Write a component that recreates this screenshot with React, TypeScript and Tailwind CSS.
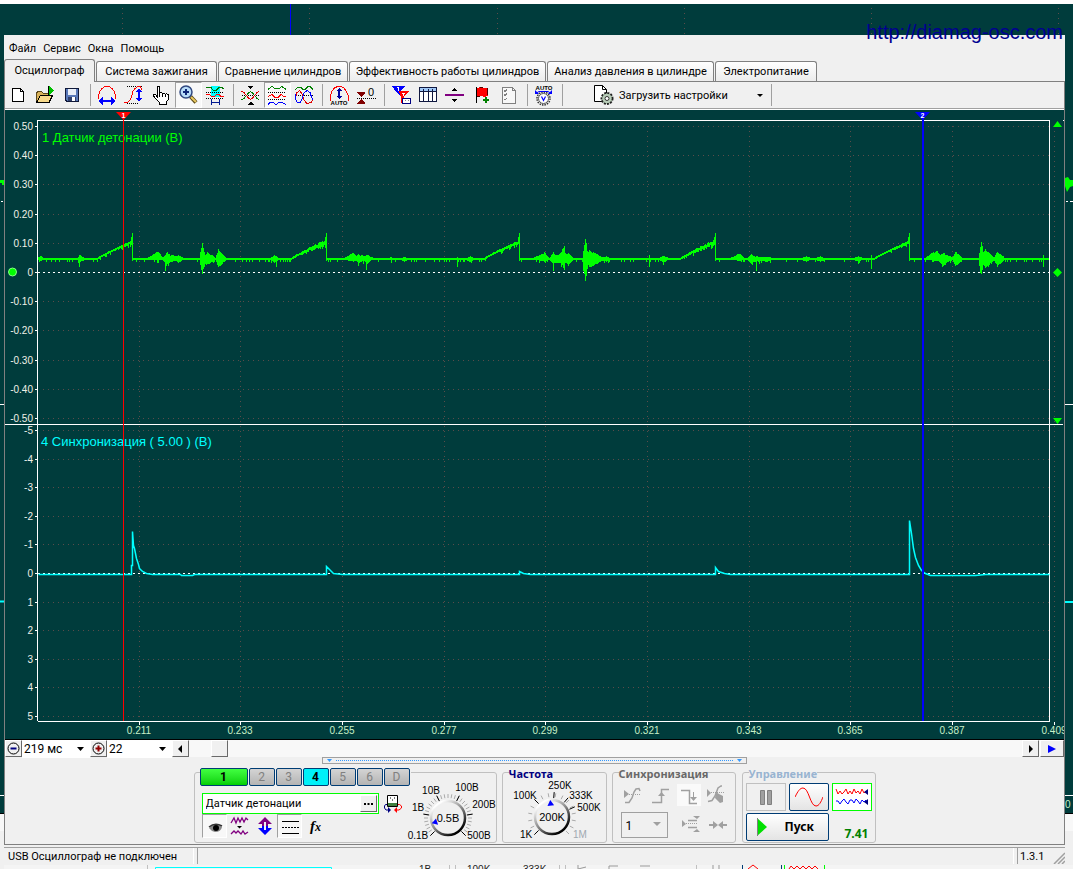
import type { ReactNode } from "react";

const GRID_X = [139, 240, 342, 444, 545, 647, 749, 850, 952, 1054];
const TIME_LABELS = ["0.211", "0.233", "0.255", "0.277", "0.299", "0.321", "0.343", "0.365", "0.387", "0.409"];
const CH1_ROWS: [number, string][] = [
    [126, "0.50"], [155, "0.40"], [184, "0.30"], [214, "0.20"], [243, "0.10"], [272, "0"],
    [301, "-0.10"], [330, "-0.20"], [360, "-0.30"], [389, "-0.40"], [418, "-0.50"],
];
const CH4_ROWS: [number, string][] = [
    [430, "-5"], [459, "-4"], [487, "-3"], [516, "-2"], [544, "-1"], [573, "0"],
    [602, "1"], [630, "2"], [659, "3"], [687, "4"], [716, "5"],
];

const SPIKES = [132, 326, 519, 715, 909];

// x, spread to the left, spread to the right, height above and below the base line
const BURSTS: [number, number, number, number, number][] = [
    [40, 4, 6, 3, 2], [80, 4, 6, 4, 3], [158, 12, 5, 8, 2], [167, 5, 6, 7, 6], [172, 12, 14, 4, 3], [178, 4, 6, 4, 4],
    [202, 3, 3, 18, 16], [207, 4, 9, 7, 6], [218, 3, 8, 10, 9],
    [274, 5, 6, 4, 4], [353, 10, 5, 7, 3], [358, 3, 5, 6, 5], [362, 12, 16, 4, 3], [367, 4, 5, 5, 5], [391, 5, 5, 2, 2], [404, 5, 5, 2, 3], [470, 6, 5, 3, 3],
    [544, 12, 5, 7, 3], [553, 4, 5, 7, 6], [560, 14, 14, 5, 5], [563, 5, 4, 13, 9], [568, 5, 5, 7, 7],
    [585, 3, 3, 23, 24], [589, 4, 15, 9, 9], [606, 6, 5, 3, 3], [663, 5, 6, 4, 4],
    [739, 10, 5, 6, 2], [751, 5, 7, 5, 5], [755, 12, 20, 3, 3], [766, 9, 8, 3, 3],
    [806, 6, 6, 3, 3], [820, 6, 6, 3, 3], [858, 6, 6, 3, 3],
    [936, 12, 6, 9, 2], [943, 6, 6, 7, 8], [944, 12, 12, 5, 4], [955, 3, 8, 8, 8], [981, 3, 3, 18, 17], [985, 5, 9, 11, 10], [997, 4, 8, 8, 8],
];

// single column ticks: x, up, down
const TICKS: [number, number, number][] = [
    [79, 4, 8], [165, 3, 12], [276, 3, 8], [366, 2, 11], [457, 2, 8], [553, 7, 12],
    [564, 13, 11], [649, 4, 8], [756, 3, 12], [871, 4, 10], [1043, 4, 8],
];

function noise(n: number) {
    const v = Math.sin(n * 12.9898) * 43758.5453;
    return v - Math.floor(v);
}

function knockTrace() {
    let d = "";
    for (let x = 38; x < 1049; x++) {
        let mid = 259;
        let up = 1;
        let down = 1;
        const spike = SPIKES.find((s) => x > s - 35 && x <= s);
        if (spike) {
            const t = (x - spike + 35) / 35;
            mid = 259 - 17 * Math.pow(t, 0.85);
            // two of the ramps end noisier than the others
            const rough = spike === 326 || spike === 715 ? 2 : 1;
            up += noise(x) * t * rough;
            down += noise(x + 7) * 1.5 * t * rough;
            if (x === spike - 1) up = 5;
            if (x === spike) {
                up = 9;
                down = 19;
            }
        }
        for (const [bx, left, right, bu, bd] of BURSTS) {
            const k = x < bx ? 1 - (bx - x) / left : 1 - (x - bx) / right;
            if (k > 0) {
                const swell = Math.pow(k, 0.8);
                up = Math.max(up, bu * swell * (0.8 + noise(x) * 0.2));
                down = Math.max(down, bd * swell * (0.8 + noise(x + 3) * 0.2));
            }
        }
        const tick = TICKS.find((t) => t[0] === x);
        if (tick) {
            up = Math.max(up, tick[1]);
            down = Math.max(down, tick[2]);
        } else if (noise(x + 50) > 0.86) {
            down += 2;
        }
        d += `M${x}.5 ${Math.round(mid - up)}V${Math.round(mid + down)}`;
    }
    return d;
}

const SYNC_TRACE =
    "M38 574H131V565H132V531L133 545L134 548L136 558L138 564L139 568L142 571L146 573L152 574H180L181 575H192L194 574H326V566L329 569L333 573L342 574H519V571L523 573L530 574H715V567L718 571L724 573L730 574H909V520L911 533L913 548L915 557L918 565L921 570L925 573L930 575H975L985 574H1049";

function Chart() {
    return (
        <svg viewBox="5 110 1059 629" className="block h-auto w-full bg-[#003c3c]" fontFamily="Liberation Sans, Arial, sans-serif" fontSize="10">
            <g stroke="#5a4c4a" strokeDasharray="1 4" shapeRendering="crispEdges">
                {GRID_X.map((x) => (
                    <line key={x} x1={x + 0.5} x2={x + 0.5} y1="126" y2="721" />
                ))}
                {[...CH1_ROWS, ...CH4_ROWS].map(([y]) => (
                    <line key={y} x1="43" x2="1049" y1={y + 0.5} y2={y + 0.5} />
                ))}
            </g>
            <g fill="#f0f0e8" textAnchor="end">
                {[...CH1_ROWS, ...CH4_ROWS].map(([y, label]) => (
                    <text key={y} x="33" y={y + 4}>{label}</text>
                ))}
            </g>
            <g fill="#c8f0c8" textAnchor="middle">
                {GRID_X.map((x, i) => (
                    <text key={x} x={x} y="734">{TIME_LABELS[i]}</text>
                ))}
            </g>
            <g stroke="#fff" fill="none" shapeRendering="crispEdges">
                <path d="M37.500 721V120.500H1049.500V721.500H37.500M5 424.500H1063M1063 120.500H1064" />
                {[...CH1_ROWS, ...CH4_ROWS].map(([y]) => (
                    <path key={y} d={`M35 ${y}.5H38`} />
                ))}
                {GRID_X.map((x) => (
                    <path key={x} d={`M${x}.5 722V725`} />
                ))}
                <path d="M38 272.500H1049M38 573.500H1049" strokeDasharray="2 3" />
            </g>
            <path d={knockTrace()} stroke="#00ff00" shapeRendering="crispEdges" />
            <path d={SYNC_TRACE} stroke="#00ffff" strokeWidth="1.500" fill="none" transform="translate(0.5 0.5)" />
            <g fill="#00ff00">
                <circle cx="12.500" cy="272" r="4" stroke="#8f8" />
                <path d="M1053 127L1057.500 121L1062 127ZM1053 418H1062L1057.500 424ZM1053 272.500L1057.500 268L1062 272.500L1057.500 277Z" />
            </g>
            <text x="42" y="142" fontSize="13" fill="#00ff00">1 Датчик детонации (В)</text>
            <text x="41" y="446" fontSize="13" fill="#00ffff">4 Синхронизация ( 5.00 ) (В)</text>
            <g shapeRendering="crispEdges">
                <path d="M123.500 118V721" stroke="#ff0000" />
                <path d="M922.500 118V721" stroke="#0000ff" strokeWidth="2" />
            </g>
            <path d="M116 112H131L123.500 120Z" fill="#ff0000" />
            <path d="M915 112H930L922.500 120Z" fill="#0000ff" />
            <g fill="#fff" fontSize="7" fontWeight="bold" textAnchor="middle">
                <text x="123.500" y="118">1</text>
                <text x="922.500" y="118">2</text>
            </g>
        </svg>
    );
}

// Second application window that shows around the edges
function BackWindow() {
    return (
        <svg viewBox="0 0 1077 869" preserveAspectRatio="xMinYMin slice" className="absolute inset-0 h-full w-full" fontFamily="Liberation Sans, Arial, sans-serif">
            <path d="M0 0H1077V869H0Z" fill="#f0f0f0" />
            <path d="M0 0H1077V4H0Z" fill="#fff" />
            <path d="M0 4H1073V814H0Z" fill="#003c3c" />
            <path d="M1073 4H1077V869H1073Z" fill="#fff" />
            <path d="M0 813.500H1073" stroke="#000" />
            <path d="M0 814H1073V831H0Z" fill="#f8f8f8" />
            <g stroke="#5a4c4a" strokeDasharray="1 4">
                <path d="M122.500 8V35M309.500 8V35M497.500 8V35M684.500 8V35M871.500 8V35M1058.500 8V35" />
            </g>
            <path d="M290.500 4V35" stroke="#0000ff" strokeWidth="1" />
            <path d="M0 180H4V185H2V183H0ZM1065 178L1068 177L1070 180H1073V186L1070 187L1067 192L1065 186Z" fill="#00ff00" />
            <path d="M1 201.500H3M1066 201.500H1068M1070 201.500H1073M0 404.500H4M1065 404.500H1073M0 795.500H4M1065 795.500H1073" stroke="#fff" />
            <path d="M0 601.500H4M1065 602H1073" stroke="#00ffff" strokeWidth="2" />
            <text x="1065" y="808" fontSize="10" fill="#c8f0c8">0</text>
            <path d="M4 865H1073V869H4Z" fill="#f4f4f4" />
            <path d="M155.500 869V867.500H331.500V869" stroke="#0ff" fill="none" />
            <path d="M147.500 865V869M449.500 865V869M455.500 865V869M559.500 865V869M565.500 865V869M696.500 865V869" stroke="#c0c0c0" />
            <g fontSize="10" fill="#222">
                <text x="419" y="873">1В</text>
                <text x="467" y="873">100K</text>
                <text x="523" y="873">333K</text>
            </g>
            <path d="M578 865V869L586 867M618 866H609V869M650 866H640M713 865V869M719 865V869" stroke="#999" fill="none" />
            <path d="M742.500 865V869M781.500 865V869" stroke="#003c74" />
            <path d="M748 869L753 865L758 869M789 869L791 866L794 869L797 866L800 869L803 866L806 869L809 866L812 869L815 866L818 869" stroke="#ff0000" fill="none" />
            <path d="M784.500 865V869M824.500 865V869" stroke="#00ff00" />
        </svg>
    );
}

function ToolButton({ label, pressed, children }: { label: string; pressed?: boolean; children: ReactNode }) {
    return (
        <button
            type="button"
            aria-label={label}
            aria-pressed={pressed}
            className={`h-[26px] w-[27px] shrink-0 border ${pressed ? "border-t-[#a0a0a0] border-l-[#a0a0a0] border-r-white border-b-white bg-[#f8f8f8]" : "border-transparent"}`}
        >
            <svg viewBox="1 1 25 24" className="h-[24px] w-[25px]" fill="none" shapeRendering="crispEdges">
                {children}
            </svg>
        </button>
    );
}

function Separator() {
    return (
        <div className="flex h-[26px] w-2 shrink-0 justify-center py-0.5">
            <div className="w-px bg-[#a0a0a0]" />
        </div>
    );
}

function Toolbar() {
    return (
        <div className="flex h-[27px] items-center border-b border-[#a0a0a0] bg-[#f0f0f0]">
            <ToolButton label="Новый">
                <path d="M7.500 6.500H15.500L18.500 9.500V19.500H7.500Z" fill="#fff" stroke="#000" />
                <path d="M15.500 6.500V9.500H18.500" stroke="#000" />
            </ToolButton>
            <ToolButton label="Открыть">
                <path d="M4.500 20.500V10.500L6.500 9.500H9.500L11.500 11.500H16.500V13.500" fill="#d9b25a" stroke="#5b471b" />
                <path d="M4.500 20.500L8.500 13.500H20.500L17 20.500Z" fill="#f7d98a" stroke="#000" />
                <path d="M16.500 4V13" stroke="#000" />
                <path d="M17 4L22 9L17 13Z" fill="#00c000" />
            </ToolButton>
            <ToolButton label="Сохранить">
                <path d="M6.500 6.500H19.500V19.500H8L6.500 18Z" fill="#5878b8" stroke="#101838" />
                <path d="M9 7H17V13H9Z" fill="#e8eef8" />
                <path d="M9 15H17V19H9Z" fill="#30406c" />
                <path d="M13 15H16V19H13Z" fill="#fff" />
            </ToolButton>
            <Separator />
            <ToolButton label="Период">
                <path d="M4.500 17V14L5.500 10L8 6.500L11 4.500H15L18 6.500L20.500 10L21.500 14V17" stroke="#ff0000" />
                <path d="M8 19H18" stroke="#0000ff" strokeWidth="2" />
                <path d="M4 19L9 15V23ZM22 19L17 15V23Z" fill="#0000ff" />
            </ToolButton>
            <ToolButton label="Амплитуда">
                <path d="M6 4.500H22M6 21.500H17" stroke="#000" strokeDasharray="1 1" />
                <path d="M3 20.500H5.500L8.500 19.500L10.500 14.500L12 9L14 6.500L17 4.500H19L21.500 8.500" stroke="#ff0000" />
                <path d="M18 9V18" stroke="#0000ff" strokeWidth="2" />
                <path d="M18 6L21 10H15ZM18 20L21 16H15Z" fill="#0000ff" />
            </ToolButton>
            <ToolButton label="Рука">
                <path d="M9.500 15.500V6C9.500 4 11.500 4 11.500 6V11.500C12 10 14 10.500 14.500 12C15 10.800 17 11 17.500 12.500C18 11.500 20.500 12 20.500 14L20 18L18.500 20V22H11V20L8 17L5.500 14C4.500 12.500 6.500 11.500 7.500 12.500L9.500 15" fill="#fff" stroke="#000" />
                <path d="M11.500 11V14.500M14.500 12V14.500M17.500 12.500V15" stroke="#000" />
            </ToolButton>
            <ToolButton label="Лупа" pressed>
                <g shapeRendering="auto">
                    <path d="M15.500 14.500L21 20.500" stroke="#5c4a18" strokeWidth="4" />
                    <path d="M16 15L21 20" stroke="#e8c860" strokeWidth="2" />
                    <circle cx="11" cy="10" r="6" fill="#b8dcf8" stroke="#304880" strokeWidth="1.500" />
                    <path d="M8 10H14M11 7V13" stroke="#102878" strokeWidth="2" />
                </g>
            </ToolButton>
            <ToolButton label="Интервал">
                <path d="M9 4H18V15H9Z" fill="#00ffff" />
                <path d="M4 5.500H9L11.500 8.500H14L17 5.500H20L22 7" stroke="#007800" />
                <path d="M4 10.500H22M4 16.500H22" stroke="#000" strokeDasharray="1 1" />
                <path d="M4 12.500H7L10 14.500H12L15 12.500H17L19 14.500H22" stroke="#ff0000" />
                <path d="M9.500 17V23M17.500 17V23M10 20.500H17" stroke="#001890" />
            </ToolButton>
            <Separator />
            <ToolButton label="Свести">
                <path d="M10.500 4H16.500L13.500 7ZM10.500 22.500H16.500L13.500 19.500Z" fill="#000" />
                <path d="M5 13.500H22" stroke="#000" strokeDasharray="1 1" />
                <path d="M4.500 17.500L7 16.500L11 11.500L13.500 9.500L16 11.500L20 16.500L22.500 17.500" stroke="#008000" />
                <path d="M4.500 9.500L7 10.500L11 15.500L13.500 17.500L16 15.500L20 10.500L22.500 9.500" stroke="#e00000" />
            </ToolButton>
            <ToolButton label="Разнести" pressed>
                <path d="M4 7.500L8 4.500L11 6.500H15L18 4.500L22 7.500" stroke="#008000" />
                <path d="M4 10.500H22M4 17.500H22" stroke="#000" strokeDasharray="1 1" />
                <path d="M4 14.500L8 12.500L11 15.500H14L17 12.500L20 14.500H22" stroke="#ff0000" />
                <path d="M4 22.500L6 20.500H9L12 22.500L15 20.500H18L22 22.500" stroke="#0000ff" />
            </ToolButton>
            <ToolButton label="Совместить">
                <path d="M4 7.500L7 5.500H10L12 7.500H14L17 4.500H19L22 7.500" stroke="#008000" />
                <path d="M5 13.500H22" stroke="#000" strokeDasharray="1 1" />
                <path d="M4.500 18L5.500 11L8.500 8.500L11 12L13 18L16 21.500L20 20.500L22 17.500" stroke="#e00000" />
                <path d="M4.500 12V17L6.500 20.500H9L11 17L13 11L16 8.500L19 10.500L20.500 15L22 18" stroke="#0000ff" />
            </ToolButton>
            <Separator />
            <ToolButton label="Авто амплитуда">
                <path d="M4.500 19V14L6 9L9 5.500L12 4.500H15L18 6L20.500 10L22.500 14V19" stroke="#ff0000" />
                <path d="M13 8V15" stroke="#0000a0" strokeWidth="2" />
                <path d="M13 6L16 9H10ZM13 17L16 14H10Z" fill="#0000a0" />
                <text x="13" y="23" textAnchor="middle" fontSize="6" fontWeight="bold" fill="#000" fontFamily="Liberation Sans, sans-serif">AUTO</text>
            </ToolButton>
            <ToolButton label="Ноль">
                <path d="M4 10H12V11L8 15L4 11ZM4 22H12V21L8 17L4 21Z" fill="#800000" />
                <path d="M4 16.500H23" stroke="#000" strokeDasharray="1 1" />
                <text x="15" y="14" fontSize="11" fill="#000" fontFamily="Liberation Sans, sans-serif">0</text>
            </ToolButton>
            <Separator />
            <ToolButton label="Фильтр">
                <path d="M4 4H17L12 10L13 15L9 11Z" fill="#0000ff" />
                <path d="M11 9H21L16 15V21H13V15Z" fill="#ff0000" />
                <path d="M9 5.500H10.500V9M14 11.500H17M15.500 12V14" stroke="#fff" />
                <path d="M14.500 16.500H22.500V21.500H14.500Z" fill="#fff" stroke="#000080" />
                <path d="M16.500 18.500H18M20 18.500H21" stroke="#888" />
            </ToolButton>
            <ToolButton label="Таблица">
                <path d="M4.500 5.500H21.500V19.500H4.500Z" fill="#fff" stroke="#101840" />
                <path d="M5 6H21V9H5Z" fill="#a0c8f8" />
                <path d="M4.500 9.500H21.500M8.500 7V19M13.500 7V19M17.500 7V19" stroke="#101840" />
            </ToolButton>
            <ToolButton label="Линия">
                <path d="M3 13H22" stroke="#800080" strokeWidth="2" />
                <path d="M9.500 9L12.500 6L15.500 9ZM9.500 17L12.500 20L15.500 17Z" fill="#000" />
            </ToolButton>
            <ToolButton label="Флаг">
                <path d="M7.500 5V21" stroke="#000" />
                <path d="M8 6L11 5L14 6.500L18 5.500L19 14L15 15L12 13.500L8 15Z" fill="#ff0000" />
                <path d="M11 5.500H14M18.500 6V13M8 14.500H11" stroke="#500000" />
                <path d="M17 15V21M14 18H20" stroke="#008000" strokeWidth="2" />
            </ToolButton>
            <ToolButton label="Список">
                <path d="M6.500 5.500H16.500L19.500 8.500V21.500H6.500Z" fill="#f8f8f8" stroke="#808080" />
                <path d="M8 8.500L9 9.500L11 7.500M8 12.500L9 13.500L11 11.500M8 17L9 18L11 16" stroke="#808080" />
                <path d="M16.500 5.500V8.500H19.500" stroke="#808080" />
            </ToolButton>
            <Separator />
            <ToolButton label="Авто">
                <text x="13" y="8" textAnchor="middle" fontSize="6" fontWeight="bold" fill="#000" fontFamily="Liberation Sans, sans-serif">AUTO</text>
                <g shapeRendering="auto">
                    <circle cx="12.500" cy="16.500" r="6.500" stroke="#333" strokeWidth="1.500" strokeDasharray="1.500 1" />
                    <circle cx="12.500" cy="16.500" r="5" fill="#fff" stroke="#555" />
                    <path d="M10.500 14.500L12.500 18.500L14.500 14.500" stroke="#0000ff" strokeWidth="1.200" />
                    <path d="M4.500 11.500L8 9.500H17L20.500 11.500" stroke="#0000ff" />
                    <path d="M4 8V12H8ZM21 8V12H17Z" fill="#0000ff" />
                </g>
            </ToolButton>
            <Separator />
            <button type="button" className="flex h-[26px] w-[201px] shrink-0 items-center pl-[26px] text-left text-[11px]">
                <svg viewBox="0 0 22 22" className="mr-[5px] h-[22px] w-[22px] shrink-0" fill="none">
                    <path d="M2.500 1.500H10.500L14.500 5.500V17.500H2.500Z" fill="#fff" stroke="#000" />
                    <path d="M10.500 1.500V5.500H14.500" stroke="#000" />
                    <circle cx="15" cy="14.500" r="5.500" fill="#a8c0a8" stroke="#222" strokeWidth="2" strokeDasharray="2 1.200" />
                    <circle cx="15" cy="14.500" r="4.500" fill="#b8ccb8" />
                    <circle cx="15" cy="14.500" r="2" fill="#fff" stroke="#333" />
                </svg>
                <span className="pt-0.5">Загрузить настройки</span>
                <svg viewBox="0 0 6 3" className="mr-1 ml-auto h-[3px] w-[6px]">
                    <path d="M0 0H6L3 3Z" />
                </svg>
            </button>
            <Separator />
        </div>
    );
}

const TABS = [
    { name: "Осциллограф", width: "w-[91px]" },
    { name: "Система зажигания", width: "w-[121px]" },
    { name: "Сравнение цилиндров", width: "w-[130px]" },
    { name: "Эффективность работы цилиндров", width: "w-[197px]" },
    { name: "Анализ давления в цилиндре", width: "w-[167px]" },
    { name: "Электропитание", width: "w-[102px]" },
];

function Tabs() {
    return (
        <div role="tablist" className="flex h-[23px] items-end gap-px border-b border-[#808080] text-[11px]">
            {TABS.map((tab, i) => (
                <button
                    key={tab.name}
                    type="button"
                    role="tab"
                    aria-selected={i === 0}
                    className={`shrink-0 rounded-t-[3px] border border-b-0 border-[#808080] whitespace-nowrap ${tab.width} ${
                        i === 0 ? "-mb-px h-[23px] bg-[#f0f0f0]" : "h-[20px] bg-linear-to-b from-white to-[#ececec] pt-0.5"
                    }`}
                >
                    {tab.name}
                </button>
            ))}
        </div>
    );
}

function ScrollRow() {
    return (
        <div className="flex h-[18px] border-t border-black bg-[#f8f8f8] text-[12px]">
            <RaisedButton label="Уменьшить">
                <circle cx="7.500" cy="7.500" r="5.500" stroke="#000" fill="none" />
                <path d="M4.500 7.500H10.500" stroke="#000080" strokeWidth="2" />
            </RaisedButton>
            <Combo label="Развертка" value="219 мс" className="w-[68px]" />
            <RaisedButton label="Увеличить">
                <circle cx="7.500" cy="7.500" r="5.500" stroke="#000" fill="none" />
                <path d="M4.500 7.500H10.500M7.500 4.500V10.500" stroke="#900000" strokeWidth="2" />
            </RaisedButton>
            <Combo label="Масштаб" value="22" className="w-[65px]" />
            <RaisedButton label="Влево">
                <path d="M9 4V12L5 8Z" />
            </RaisedButton>
            <div className="flex grow bg-[#f8f8f8] pl-[22px]">
                <div className="w-[17px] border border-t-white border-l-white border-r-[#696969] border-b-[#696969] bg-[#f0f0f0]" />
            </div>
            <RaisedButton label="Вправо">
                <path d="M6 4V12L10 8Z" />
            </RaisedButton>
            <button type="button" aria-label="Воспроизвести" className="ml-px flex w-6 items-center justify-center border border-t-white border-l-white border-r-[#696969] border-b-[#696969] bg-[#f0f0f0]">
                <svg viewBox="0 0 8 8" className="h-2 w-2">
                    <path d="M0 0L8 4L0 8Z" fill="#0000ff" />
                </svg>
            </button>
        </div>
    );
}

function RaisedButton({ label, children }: { label: string; children: ReactNode }) {
    return (
        <button type="button" aria-label={label} className="w-[17px] shrink-0 border border-t-white border-l-white border-r-[#696969] border-b-[#696969] bg-[#f0f0f0]">
            <svg viewBox="0 0 15 15" className="h-[15px] w-[15px]">
                {children}
            </svg>
        </button>
    );
}

function Combo({ label, value, className }: { label: string; value: string; className: string }) {
    return (
        <div className={`relative shrink-0 bg-white ${className}`}>
            <select aria-label={label} className="h-[17px] w-full appearance-none bg-white pl-0.5 leading-[17px]">
                <option>{value}</option>
            </select>
            <svg viewBox="0 0 7 4" className="pointer-events-none absolute top-[7px] right-[6px] h-1 w-[7px]">
                <path d="M0 0H7L3.500 4Z" />
            </svg>
        </div>
    );
}

interface KnobProps {
    value: string;
    label: string;
    cx: number;
    cy: number;
    pointer: number;
    step: number;
    marks: number[];
    labels: [number, number, string][];
}

function polar(cx: number, cy: number, r: number, angle: number) {
    const a = ((angle - 90) * Math.PI) / 180;
    return `${(cx + r * Math.cos(a)).toFixed(1)} ${(cy + r * Math.sin(a)).toFixed(1)}`;
}

function Knob({ value, label, cx, cy, pointer, step, marks, labels }: KnobProps) {
    const minor: number[] = [];
    for (let a = -135; a <= 135; a += step) minor.push(a);
    return (
        <svg role="img" aria-label={label} viewBox="0 0 100 66" className="h-[66px] w-[100px] shrink-0" fontFamily="Liberation Sans, Arial, sans-serif" fontSize="10">
            <defs>
                <linearGradient id={`rim-${value}`} x1="0.2" y1="0.1" x2="0.8" y2="0.9">
                    <stop offset="0" stopColor="#fff" />
                    <stop offset="0.5" stopColor="#888" />
                    <stop offset="1" stopColor="#000" />
                </linearGradient>
            </defs>
            {minor.map((a) => (
                <path key={a} d={`M${polar(cx, cy, 20, a)}L${polar(cx, cy, 24, a)}`} stroke="#aaa" />
            ))}
            {marks.map((a) => (
                <path key={a} d={`M${polar(cx, cy, 19, a)}L${polar(cx, cy, 25, a)}`} stroke="#000" />
            ))}
            <circle cx={cx} cy={cy} r="17" fill="#f0f0f0" stroke={`url(#rim-${value})`} strokeWidth="2.500" />
            <path d={`M${polar(cx, cy, 17, pointer)}L${polar(cx, cy, 12, pointer - 16)}L${polar(cx, cy, 12, pointer + 16)}Z`} fill="#0000ff" />
            <text x={cx} y={cy + 4} textAnchor="middle" fontSize="11">{value}</text>
            {labels.map(([x, y, text]) => (
                <text key={text} x={x} y={y} textAnchor="middle" fill={text === "1M" ? "#a0a8b0" : "#000"}>{text}</text>
            ))}
        </svg>
    );
}

const CHANNELS = ["1", "2", "3", "4", "5", "6", "D"];

function channelStyle(name: string) {
    if (name === "1") return "w-12 bg-linear-to-b from-[#40ff40] to-[#00d000] font-bold text-black";
    if (name === "4") return "w-[26px] bg-[#00f0f8] font-bold text-black";
    return "w-[26px] bg-linear-to-b from-[#d4d4d4] to-[#b4b4b4] text-[#808080]";
}

function ChannelPanel() {
    return (
        <section aria-label="Канал" className="mt-[7px] mr-[5px] flex h-[71px] w-[303px] rounded-[3px] border border-[#c0c0c0]">
            <div className="-mt-[5px] ml-[5px] w-[211px] shrink-0">
                <div className="flex gap-px bg-[#f0f0f0] text-[12px]">
                    {CHANNELS.map((name) => (
                        <button key={name} type="button" className={`h-[18px] shrink-0 rounded-[2px] border border-[#003c74] leading-4 ${channelStyle(name)}`}>
                            {name}
                        </button>
                    ))}
                </div>
                <div className="mt-[7px] ml-0.5 flex items-center gap-1">
                    <div className="flex h-[21px] w-[177px] border border-[#00ff00] bg-white p-px">
                        <input aria-label="Датчик" defaultValue="Датчик детонации" className="w-0 grow pt-0.5 pl-0.5 text-[11px] outline-none" />
                        <button type="button" aria-label="Выбрать" className="w-[17px] border border-t-white border-l-white border-r-[#696969] border-b-[#696969] bg-[#f0f0f0]">
                            <svg viewBox="0 0 15 15" className="h-[15px] w-[15px]">
                                <path d="M3 7H5V9H3ZM6.500 7H8.500V9H6.500ZM10 7H12V9H10Z" />
                            </svg>
                        </button>
                    </div>
                    <button type="button" aria-label="Переключить">
                        <svg viewBox="0 0 20 20" className="h-5 w-5" fill="none">
                            <path d="M4.500 1.500H14.500V12.500H4.500Z" fill="#fff" stroke="#000" />
                            <path d="M5 9H14V12H5Z" fill="#408040" />
                            <path d="M7 4H8M11 4H12M9 6H10" stroke="#000" />
                            <path d="M4 10.500H2.500L1.500 12V14L3 16H6" stroke="#000080" />
                            <path d="M5 13L8 16L5 19Z" fill="#000080" />
                            <path d="M15 10.500H16.500L18.500 12V14L16 16H13" stroke="#ff0000" />
                            <path d="M14 13L11 16L14 19Z" fill="#ff0000" />
                        </svg>
                    </button>
                </div>
                <div className="ml-0.5 flex">
                    <SmallToggle label="Показать" pressed>
                        <path d="M6 13Q12 7 19 12Q18 17 12 17Q8 16 6 13Z" fill="#888" />
                        <path d="M6 12Q12 7 19 11" stroke="#333" strokeWidth="1.500" />
                        <circle cx="13" cy="13" r="3" fill="#000" />
                    </SmallToggle>
                    <SmallToggle label="Инвертировать">
                        <path d="M3 8L6 3L8 8L10 3L12 7L14 3L16 7L18 3L20 5M3 19L6 16L8 18L10 16L13 19L15 16L17 19L20 17" stroke="#800080" strokeWidth="1.300" />
                        <path d="M9 11H14L11.500 13.500Z" fill="#000" />
                    </SmallToggle>
                    <SmallToggle label="Сдвиг">
                        <path d="M12 2L19 9H15V11H9V9H5Z" fill="#800080" />
                        <path d="M12 20L19 13H15V11H9V13H5Z" fill="#0000ff" />
                        <path d="M12 7V15" stroke="#f0f0f0" strokeWidth="2" />
                    </SmallToggle>
                    <SmallToggle label="Линии" pressed>
                        <path d="M4 6.500H21M4 18.500H21" stroke="#000" />
                        <path d="M4 12.500H21" stroke="#000" strokeDasharray="2 1" />
                    </SmallToggle>
                    <SmallToggle label="Функция">
                        <text x="7" y="16" fontSize="15" fontStyle="italic" fontWeight="bold" fill="#000" fontFamily="Liberation Serif, serif">f</text>
                        <text x="12" y="16" fontSize="12" fontStyle="italic" fontWeight="bold" fill="#000" fontFamily="Liberation Serif, serif">x</text>
                    </SmallToggle>
                </div>
            </div>
            <div className="-ml-3 pt-[5px]">
                <Knob
                    value="0.5В"
                    label="Чувствительность"
                    cx={49}
                    cy={40}
                    pointer={-108}
                    step={9}
                    marks={[-135, -81, -27, 27, 81, 135]}
                    labels={[[32, 16, "10В"], [68, 13, "100В"], [19, 33, "1В"], [85, 30, "200В"], [19, 61, "0.1В"], [80, 61, "500В"]]}
                />
            </div>
        </section>
    );
}

function SmallToggle({ label, pressed, children }: { label: string; pressed?: boolean; children: ReactNode }) {
    return (
        <button
            type="button"
            aria-label={label}
            aria-pressed={pressed}
            className={`h-6 w-[25px] border ${pressed ? "border-t-[#a0a0a0] border-l-[#a0a0a0] border-r-white border-b-white bg-[#f8f8f8]" : "border-transparent"}`}
        >
            <svg viewBox="0 0 23 22" className="h-[22px] w-[23px]" fill="none">
                {children}
            </svg>
        </button>
    );
}

function Panel({ title, titleColor, className, children }: { title: string; titleColor: string; className: string; children: ReactNode }) {
    return (
        <fieldset className={`h-[78px] rounded-[3px] border border-[#c0c0c0] ${className}`}>
            <legend className={`ml-1.5 h-[14px] pt-0.5 font-['Noto_Sans',sans-serif] text-[11px] leading-[14px] font-bold ${titleColor}`}>{title}</legend>
            {children}
        </fieldset>
    );
}

function SyncIcon({ label, pressed, children }: { label: string; pressed?: boolean; children: ReactNode }) {
    return (
        <button type="button" disabled aria-label={label} className={`h-[22px] w-6 ${pressed ? "bg-[#fafafa]" : ""}`}>
            <svg viewBox="0 0 24 22" className="h-[22px] w-6" fill="none" stroke="#a0a0a0">
                {children}
            </svg>
        </button>
    );
}

function Controls() {
    return (
        <div className="flex justify-center pt-px pb-px">
            <ChannelPanel />
            <Panel title="Частота" titleColor="text-[#000080]" className="mr-[5px] w-[105px]">
                <div className="-mt-px">
                    <Knob
                        value="200K"
                        label="Частота"
                        cx={49}
                        cy={39}
                        pointer={-6}
                        step={18}
                        marks={[-135, -45, 5, 40, 66]}
                        labels={[[57, 11, "250K"], [22, 21, "100K"], [78, 21, "333K"], [86, 33, "500K"], [23, 60, "1K"], [77, 60, "1M"]]}
                    />
                </div>
            </Panel>
            <Panel title="Синхронизация" titleColor="text-[#696969]" className="mr-1.5 w-[124px]">
                <div className="mt-[5px] ml-2 flex gap-1">
                    <SyncIcon label="По уровню">
                        <path d="M3 6V14L8 10Z" fill="#a0a0a0" stroke="none" />
                        <path d="M8 10.500H20" strokeDasharray="1 1" />
                        <path d="M4 18.500H8L11 14L13 8L15 5L18 4.500L19 7" strokeWidth="1.500" />
                    </SyncIcon>
                    <SyncIcon label="По фронту">
                        <path d="M3 18.500H12.500V5.500H20" strokeWidth="1.500" />
                        <path d="M9 12L12.500 8L16 12Z" fill="#a0a0a0" stroke="none" />
                    </SyncIcon>
                    <SyncIcon label="По спаду" pressed>
                        <path d="M4 6.500H12.500V19.500H20" strokeWidth="1.500" />
                        <path d="M16.500 8V14" />
                        <path d="M13 13H20L16.500 17Z" fill="#a0a0a0" stroke="none" />
                    </SyncIcon>
                    <SyncIcon label="Вручную">
                        <path d="M2 5V13L6 9Z" fill="#a0a0a0" stroke="none" />
                        <path d="M6 8.500H20" strokeDasharray="1 1" />
                        <path d="M3 17.500L7 16.500L10 12L13 4L16 2H17" strokeWidth="1.500" />
                        <path d="M11 8L14 10L18 12V18L15 19L10 14Z" fill="#a0a0a0" stroke="none" />
                    </SyncIcon>
                </div>
                <div className="mt-1.5 ml-2 flex items-center">
                    <div className="relative w-[47px] border border-[#a0a0a0]">
                        <select disabled aria-label="Канал синхронизации" className="h-5 w-full appearance-none pl-1 text-[12px] text-black opacity-100">
                            <option>1</option>
                        </select>
                        <svg viewBox="0 0 8 4" className="pointer-events-none absolute top-[9px] right-[6px] h-1 w-2">
                            <path d="M0 0H8L4 4Z" fill="#a0a0a0" />
                        </svg>
                    </div>
                    <div className="ml-3 flex gap-1">
                        <SyncIcon label="Уровень">
                            <path d="M2 6V13L6 10ZM13 2H20L17 5ZM13 18H20L17 15Z" fill="#a0a0a0" stroke="none" />
                            <path d="M6 9.500H18" strokeDasharray="1 1" />
                            <path d="M8 6.500H17M8 13.500H17" strokeWidth="1.500" />
                        </SyncIcon>
                        <SyncIcon label="Центр">
                            <path d="M1 11H6M19 11H14" strokeWidth="2" />
                            <path d="M5 7V15L10 11ZM15 7V15L10 11Z" fill="#a0a0a0" stroke="none" />
                        </SyncIcon>
                    </div>
                </div>
            </Panel>
            <Panel title="Управление" titleColor="text-[#99b4d1]" className="w-[134px]">
                <div className="mt-1 ml-[3px] flex gap-[3px]">
                    <button type="button" disabled aria-label="Пауза" className="flex h-7 w-10 items-center justify-center border border-[#c0c0c0]">
                        <svg viewBox="0 0 12 15" className="h-[15px] w-3">
                            <path d="M0.500 0.500H4.500V14.500H0.500ZM7.500 0.500H11.500V14.500H7.500Z" fill="#a0a0a0" stroke="#808080" />
                        </svg>
                    </button>
                    <button type="button" aria-label="Однократно" className="flex h-7 w-10 items-center justify-center rounded-[2px] border border-[#003c74] bg-linear-to-b from-white to-[#e4e4e4]">
                        <svg viewBox="0 0 28 20" className="h-5 w-7" fill="none">
                            <path d="M0 10C3 4 5 1 8 1C14 1 15 19 21 19C24 19 26 15 28 10" stroke="#ff0000" />
                        </svg>
                    </button>
                    <button type="button" aria-label="Непрерывно" className="flex h-7 w-10 items-center justify-center border border-[#00ff00] bg-white">
                        <svg viewBox="0 0 34 20" className="h-5 w-[34px]" fill="none">
                            <path d="M1 2L3 7L5 4L7 7L9 5L11 2L13 7L15 4L17 7L19 2L21 6L23 4L25 7L27 2L29 6L31 4" stroke="#ff0000" />
                            <path d="M1 14H3L5 17L7 14L9 12L11 15L13 17L15 13H17L19 16L21 12L23 14L25 17L27 13L29 15L31 13" stroke="#0000ff" />
                            <path d="M33 2V8L29 5ZM33 12V18L29 15Z" fill="#000080" />
                        </svg>
                    </button>
                </div>
                <div className="mt-0.5 ml-[3px] flex items-end">
                    <button type="button" className="flex h-7 w-[83px] items-center rounded-[2px] border border-[#003c74] bg-linear-to-b from-white to-[#e4e4e4] pl-2.5 font-['Noto_Sans',sans-serif] text-[12px] font-bold">
                        <svg viewBox="0 0 10 18" className="mr-[18px] h-[18px] w-2.5">
                            <path d="M0 0L10 9L0 18Z" fill="#00e000" />
                            <path d="M0.500 0V18" stroke="#808080" />
                        </svg>
                        Пуск
                    </button>
                    <span className="ml-4 font-['Noto_Sans',sans-serif] text-[12px] leading-[14px] font-bold text-[#008000]">7.41</span>
                </div>
            </Panel>
        </div>
    );
}

function StatusBar() {
    return (
        <footer className="flex h-[17px] gap-[3px] border-t border-[#a0a0a0] bg-[#f0f0f0] text-[11px] leading-[17px]">
            <div className="w-[190px] border-r border-white pl-1 whitespace-nowrap">USB Осциллограф не подключен</div>
            <div className="grow border-r border-l border-r-white border-l-[#a0a0a0]" />
            <div className="flex w-12 justify-between border-l border-[#a0a0a0] pl-0.5">
                1.3.1
                <svg viewBox="0 0 12 12" className="mt-1 h-3 w-3">
                    <path d="M1 12L12 1M5 12L12 5M9 12L12 9" stroke="#a0a0a0" strokeWidth="1.500" />
                </svg>
            </div>
        </footer>
    );
}

export default function App() {
    return (
        <div className="relative min-h-screen overflow-hidden bg-white pt-[35px] pr-3 pb-1 pl-1 font-['Roboto','Liberation_Sans',sans-serif] text-black">
            <BackWindow />
            <div className="relative bg-[#f0f0f0]">
                <nav className="flex h-6 items-center gap-[7px] pt-1 pl-[5px] text-[11px]">
                    {["Файл", "Сервис", "Окна", "Помощь"].map((item) => (
                        <button key={item} type="button">{item}</button>
                    ))}
                </nav>
                <Tabs />
                <div className="border-r border-b border-l border-[#808080]">
                    <Toolbar />
                    <div className="h-px bg-white" />
                    <Chart />
                    <ScrollRow />
                    <div className="mx-auto flex h-[7px] w-[425px] items-center border border-[#a0a0a0] px-1">
                        <svg viewBox="0 0 5 3" className="h-[3px] w-[5px]">
                            <path d="M0 0H5L2.500 3Z" fill="#3399ff" />
                        </svg>
                        <div className="mx-1 grow border-t border-dotted border-[#3399ff]" />
                        <svg viewBox="0 0 5 3" className="h-[3px] w-[5px]">
                            <path d="M0 0H5L2.500 3Z" fill="#3399ff" />
                        </svg>
                    </div>
                    <Controls />
                </div>
                <div className="h-0.5" />
                <StatusBar />
            </div>
            <a href="http://diamag-osc.com" className="absolute top-5 right-3.5 font-['Liberation_Sans',Arial,sans-serif] text-[20px] leading-6 text-[#000090]">
                http://diamag-osc.com
            </a>
        </div>
    );
}
